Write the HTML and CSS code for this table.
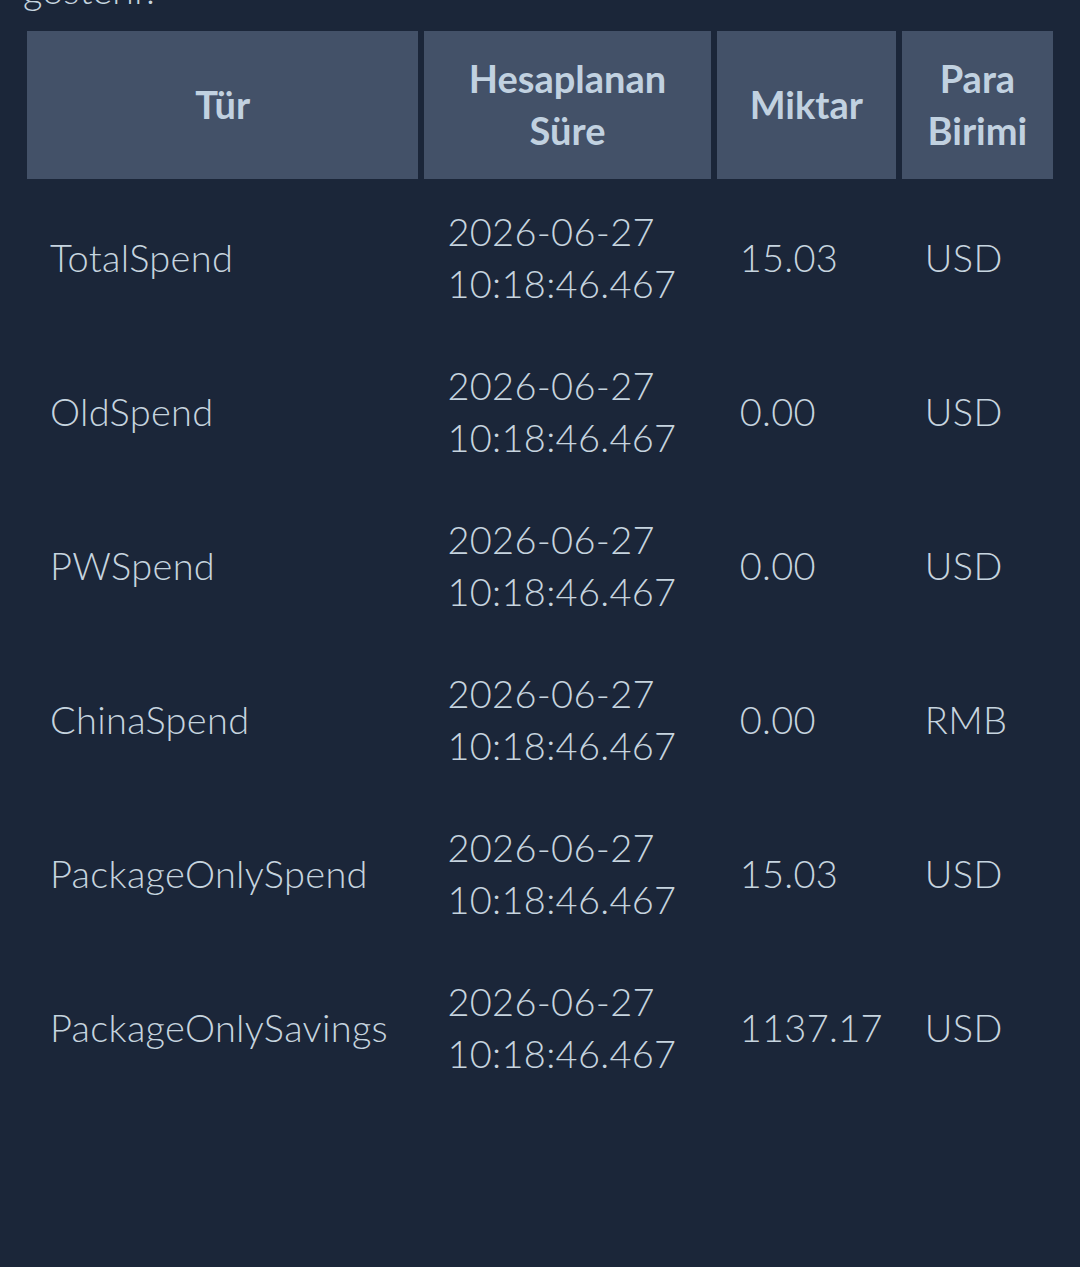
FILE: index.html
```html
<!DOCTYPE html>
<html lang="tr">
<head>
  <meta charset="UTF-8" />
  <title>Harcama Geçmişi</title>
  <link rel="stylesheet" href="styles.css">
</head>
<body>

  <div class="icerik">
    <p class="aciklama">gösterir.</p>

    <table class="harcama">
      <colgroup>
        <col class="c-tur">
        <col class="c-sure">
        <col class="c-miktar">
        <col class="c-para">
      </colgroup>
      <thead>
        <tr>
          <th>Tür</th>
          <th>Hesaplanan Süre</th>
          <th>Miktar</th>
          <th>Para Birimi</th>
        </tr>
      </thead>
      <tbody id="satirlar">
        <!-- satırlar buraya -->
      </tbody>
    </table>
  </div>

  <script>
    const veriler = [
      { tur: "TotalSpend", miktar: "15.03", para: "USD" },
      { tur: "OldSpend", miktar: "0.00", para: "USD" },
      { tur: "PWSpend", miktar: "0.00", para: "USD" },
      { tur: "ChinaSpend", miktar: "0.00", para: "RMB" },
      { tur: "PackageOnlySpend", miktar: "15.03", para: "USD" },
      { tur: "PackageOnlySavings", miktar: "1137.17", para: "USD" }
    ];

    const tbody = document.getElementById("satirlar");
    veriler.forEach(item => {
      const tr = document.createElement("tr");
      tr.innerHTML = `
        <td>${item.tur}</td>
        <td>2026-06-27 10:18:46.467</td>
        <td>${item.miktar}</td>
        <td>${item.para}</td>
      `;
      tbody.appendChild(tr);
    });
  </script>

</body>
</html>
```

FILE: styles.css
```css
body {
  font-family: Lato, "Noto Sans", sans-serif;
  background: #1b2639;
  color: #c6d4df;
  margin: 0;
  padding: 0;
}

.icerik {
  padding: 0 21px;
}

.aciklama {
  margin: -37px 0 0;
  padding-left: 2px;
  font-size: 38px;
  font-weight: 300;
  line-height: 52px;
  height: 62px;
  color: #c6d4df;
}

.harcama {
  width: 100%;
  table-layout: fixed;
  border-spacing: 6px;
  font-size: 38px;
  font-weight: 300;
  line-height: 52px;
}

.c-tur { width: 391px; }
.c-sure { width: 286px; }
.c-miktar { width: 179px; }
.c-para { width: 151px; }

.harcama th {
  background: #435168;
  color: #c1d1e0;
  font-weight: 700;
  text-align: center;
  height: 145px;
  padding: 0 12px 3px;
}

.harcama td {
  height: 144px;
  padding: 0 12px 4px 23px;
  text-align: left;
  vertical-align: middle;
  letter-spacing: 0.3px;
}
```
